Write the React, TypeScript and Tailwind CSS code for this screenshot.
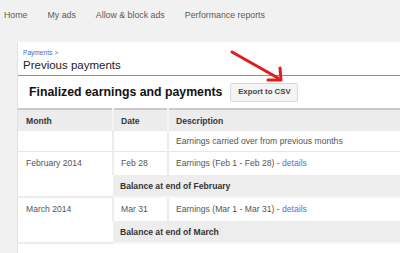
import React from 'react';

const navItems = ['Home', 'My ads', 'Allow & block ads', 'Performance reports'];

type Month = {
  label: string;
  date: string;
  range: string;
  balance: string;
};

const months: Month[] = [
  { label: 'February 2014', date: 'Feb 28', range: 'Earnings (Feb 1 - Feb 28)', balance: 'Balance at end of February' },
  { label: 'March 2014', date: 'Mar 31', range: 'Earnings (Mar 1 - Mar 31)', balance: 'Balance at end of March' }
];

function Arrow() {
  return (
    <svg className="absolute left-0 top-0 pointer-events-none" width="400" height="253">
      <line x1="232" y1="52" x2="278" y2="78" stroke="#e31b1b" strokeWidth="3" strokeLinecap="round" />
      <path d="M280 68 L281 80 L268 80" fill="none" stroke="#e31b1b" strokeWidth="3" strokeLinecap="round" strokeLinejoin="round" />
    </svg>
  );
}

export default function App() {
  return (
    <div className="relative w-[400px] h-[253px] overflow-hidden bg-[#f1f1f1] font-['Liberation_Sans',Arial,sans-serif]">
      {/* Top nav */}
      <nav className="h-[32px] flex items-center gap-[20px] pl-[4px] text-[8.8px] text-[#5a5a5a]">
        {navItems.map((item) =>
        <span key={item}>{item}</span>
        )}
      </nav>

      {/* Panel */}
      <div className="mt-[10px] ml-[17px] bg-white border-l border-[#e2e2e2] h-[240px]">
        <div className="pl-[5px] pt-[7px]">
          <div className="text-[6.6px] leading-[7px] text-[#3d6cc9]">Payments &gt;</div>
          <h1 className="mt-[2px] text-[11.5px] leading-[14px] text-[#222]">Previous payments</h1>
        </div>
        <div className="mt-[3px] h-px bg-[#7391cf]"></div>

        <div className="h-[32px] flex items-center pl-[11px] gap-[8px]">
          <h2 className="text-[12.3px] font-bold text-[#111]">Finalized earnings and payments</h2>
          <button className="w-[68px] h-[19px] bg-[#f4f4f4] border border-[#d8d8d8] rounded-[2px] text-[7.8px] font-bold text-[#444]">
            Export to CSV
          </button>
        </div>

        <table className="w-full border-collapse border-t-2 border-[#c9c9c9] text-[8.6px] leading-[10px] text-[#555] text-left">
          <thead>
            <tr className="bg-[#ececec] text-[#34343f] font-bold">
              <th className="h-[22px] w-[95px] pl-[8px] font-bold">Month</th>
              <th className="w-[55px] pl-[7px] font-bold border-l-2 border-[#f4f4f4]">Date</th>
              <th className="pl-[7px] font-bold border-l-2 border-[#f4f4f4]">Description</th>
            </tr>
          </thead>
          <tbody>
            <tr className="border-b border-[#e6e6e6]">
              <td className="h-[20px]"></td>
              <td className="border-l-2 border-[#ececec]"></td>
              <td className="pl-[7px] border-l-2 border-[#ececec]">Earnings carried over from previous months</td>
            </tr>
            {months.map((m) =>
            <React.Fragment key={m.label}>
                <tr className="align-top">
                  <td rowSpan={2} className="pl-[8px] pt-[6px] border-b-2 border-[#ececec]">{m.label}</td>
                  <td className="h-[24px] pl-[7px] pt-[6px] border-l-2 border-[#ececec]">{m.date}</td>
                  <td className="pl-[7px] pt-[6px] border-l-2 border-[#ececec]">
                    {m.range} - <span className="text-[#3f78d6]">details</span>
                  </td>
                </tr>
                <tr>
                  <td colSpan={2} className="h-[22px] pl-[7px] bg-[#ededed] font-bold text-[#333] border-b-2 border-[#f6f6f6]">
                    {m.balance}
                  </td>
                </tr>
              </React.Fragment>
            )}
          </tbody>
        </table>
      </div>
      <Arrow />
    </div>);

}
